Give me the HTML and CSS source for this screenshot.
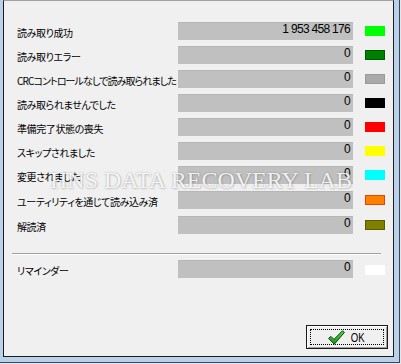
FILE: index.html
```html
<!DOCTYPE html>
<html lang="ja">
<head>
<meta charset="utf-8">
<title>Statistics</title>
<link rel="stylesheet" href="styles.css">
</head>
<body>
<div class="frame">
  <div class="window">
    <div class="rows">
      <div class="row"><span class="label">読み取り成功</span><span class="value">1 953 458 176</span><span class="swatch c-lime"></span></div>
      <div class="row"><span class="label">読み取りエラー</span><span class="value">0</span><span class="swatch c-green"></span></div>
      <div class="row"><span class="label tight">CRCコントロールなしで読み取られました</span><span class="value">0</span><span class="swatch c-gray"></span></div>
      <div class="row"><span class="label">読み取られませんでした</span><span class="value">0</span><span class="swatch c-black"></span></div>
      <div class="row"><span class="label">準備完了状態の喪失</span><span class="value">0</span><span class="swatch c-red"></span></div>
      <div class="row"><span class="label">スキップされました</span><span class="value">0</span><span class="swatch c-yellow"></span></div>
      <div class="row"><span class="label">変更されました</span><span class="value">0</span><span class="swatch c-cyan"></span></div>
      <div class="row late"><span class="label">ユーティリティを通じて読み込み済</span><span class="value">0</span><span class="swatch c-orange"></span></div>
      <div class="row late"><span class="label">解読済</span><span class="value">0</span><span class="swatch c-olive"></span></div>
    </div>
    <div class="sep"></div>
    <div class="row reminder"><span class="label">リマインダー</span><span class="value">0</span><span class="swatch c-white"></span></div>
    <button class="ok" type="button"><span class="focus"><svg class="check" width="17" height="15" viewBox="0 0 17 15"><defs><linearGradient id="g" x1="0" y1="0" x2="0" y2="1"><stop offset="0" stop-color="#58e058"/><stop offset="1" stop-color="#129012"/></linearGradient></defs><path d="M0.6 8.4 L3 6.4 L6 9.4 L14.4 0.8 L16.4 2.4 L6.3 14.2 Z" fill="url(#g)" stroke="#0a3f0a" stroke-width="1" stroke-linejoin="round"/></svg><span class="ok-text">OK</span></span></button>
    <div class="watermark">HNS DATA RECOVERY LAB</div>
  </div>
</div>
</body>
</html>
```
FILE: styles.css
```css
html { background: #e6e6e6; }
body {
  margin: 0;
  width: 401px;
  height: 364px;
  overflow: hidden;
  font-family: "Noto Sans CJK JP", "Liberation Sans", sans-serif;
}
.frame {
  box-sizing: border-box;
  width: 400px;
  height: 363px;
  padding: 0 5px 5px 3px;
  background: #b9d1ea;
  border-right: 1px solid #3a4858;
  border-bottom: 1px solid #3a4858;
}
.window {
  position: relative;
  box-sizing: border-box;
  height: 357px;
  background: #f0f0f0;
  border: 1px solid #1c1c1c;
  border-top-color: #a0a0a0;
  display: flex;
  flex-direction: column;
  padding: 21px 0 7px 0;
}
.rows {
  display: flex;
  flex-direction: column;
  gap: 6px;
  margin-left: 13px;
}
.row {
  display: grid;
  grid-template-columns: 149px 175px 20px;
  column-gap: 12px;
  height: 18px;
  align-items: start;
}
.row.late { margin-top: 1px; }
.label {
  font-size: 10px;
  line-height: 22px;
  color: #000;
  white-space: nowrap;
  letter-spacing: -0.4px;
  font-feature-settings: "palt";
}
.label.tight { letter-spacing: -0.9px; }
.value {
  box-sizing: border-box;
  height: 18px;
  background: #c0c0c0;
  border-top: 1px solid #b6b6b6;
  font-family: "Liberation Sans", sans-serif;
  font-size: 12px;
  line-height: 13px;
  letter-spacing: -0.7px;
  text-align: right;
  padding-right: 3px;
  color: #000;
}
.swatch {
  box-sizing: border-box;
  height: 10px;
  margin-top: 4px;
  border: 1px solid;
}
.c-lime { background: #00ff00; border-color: #00ff00; }
.c-green { background: #008000; border-color: #005a00; }
.c-gray { background: #aaaaaa; border-color: #9a9a9a; }
.c-black { background: #000; border-color: #000; }
.c-red { background: #ff0000; border-color: #ff0000; }
.c-yellow { background: #ffff00; border-color: #ffff00; }
.c-cyan { background: #00ffff; border-color: #00ffff; }
.c-orange { background: #ff8000; border-color: #e04a00; }
.c-olive { background: #808000; border-color: #5a5a00; }
.c-white { background: #fff; border-color: #fff; margin-top: 5px; }
.sep {
  width: 369px;
  margin: 19px 0 0 8px;
  border-top: 1px solid #a0a0a0;
  border-bottom: 1px solid #fff;
}
.reminder {
  margin: 5px 0 0 13px;
}
.ok {
  appearance: none;
  margin: auto 5px 0 0;
  align-self: flex-end;
  box-sizing: border-box;
  width: 82px;
  height: 24px;
  padding: 3px;
  background: #f0f0f0;
  border: 1px solid #1a1a1a;
  box-shadow: inset 1px 1px 0 #fff, inset -1px -1px 0 #a0a0a0;
  border-radius: 0;
  display: flex;
}
.focus {
  flex: 1;
  box-sizing: border-box;
  border: 1px dotted #000;
  display: flex;
  align-items: center;
  justify-content: center;
  gap: 4px;
}
.check { display: block; margin-top: 1px; }
.ok-text {
  display: inline-block;
  font-family: "Liberation Sans", sans-serif;
  font-size: 12px;
  line-height: 12px;
  color: #000;
  transform: scaleX(0.8);
  margin-top: 2px;
}
.watermark {
  position: absolute;
  left: 46px;
  top: 167px;
  font-family: "Liberation Serif", serif;
  font-size: 24px;
  line-height: 24px;
  white-space: nowrap;
  color: rgba(255, 255, 255, 0.9);
  text-shadow: 0 0 2px rgba(0, 0, 0, 0.3), 1px 1px 2px rgba(0, 0, 0, 0.12);
  pointer-events: none;
}
```
